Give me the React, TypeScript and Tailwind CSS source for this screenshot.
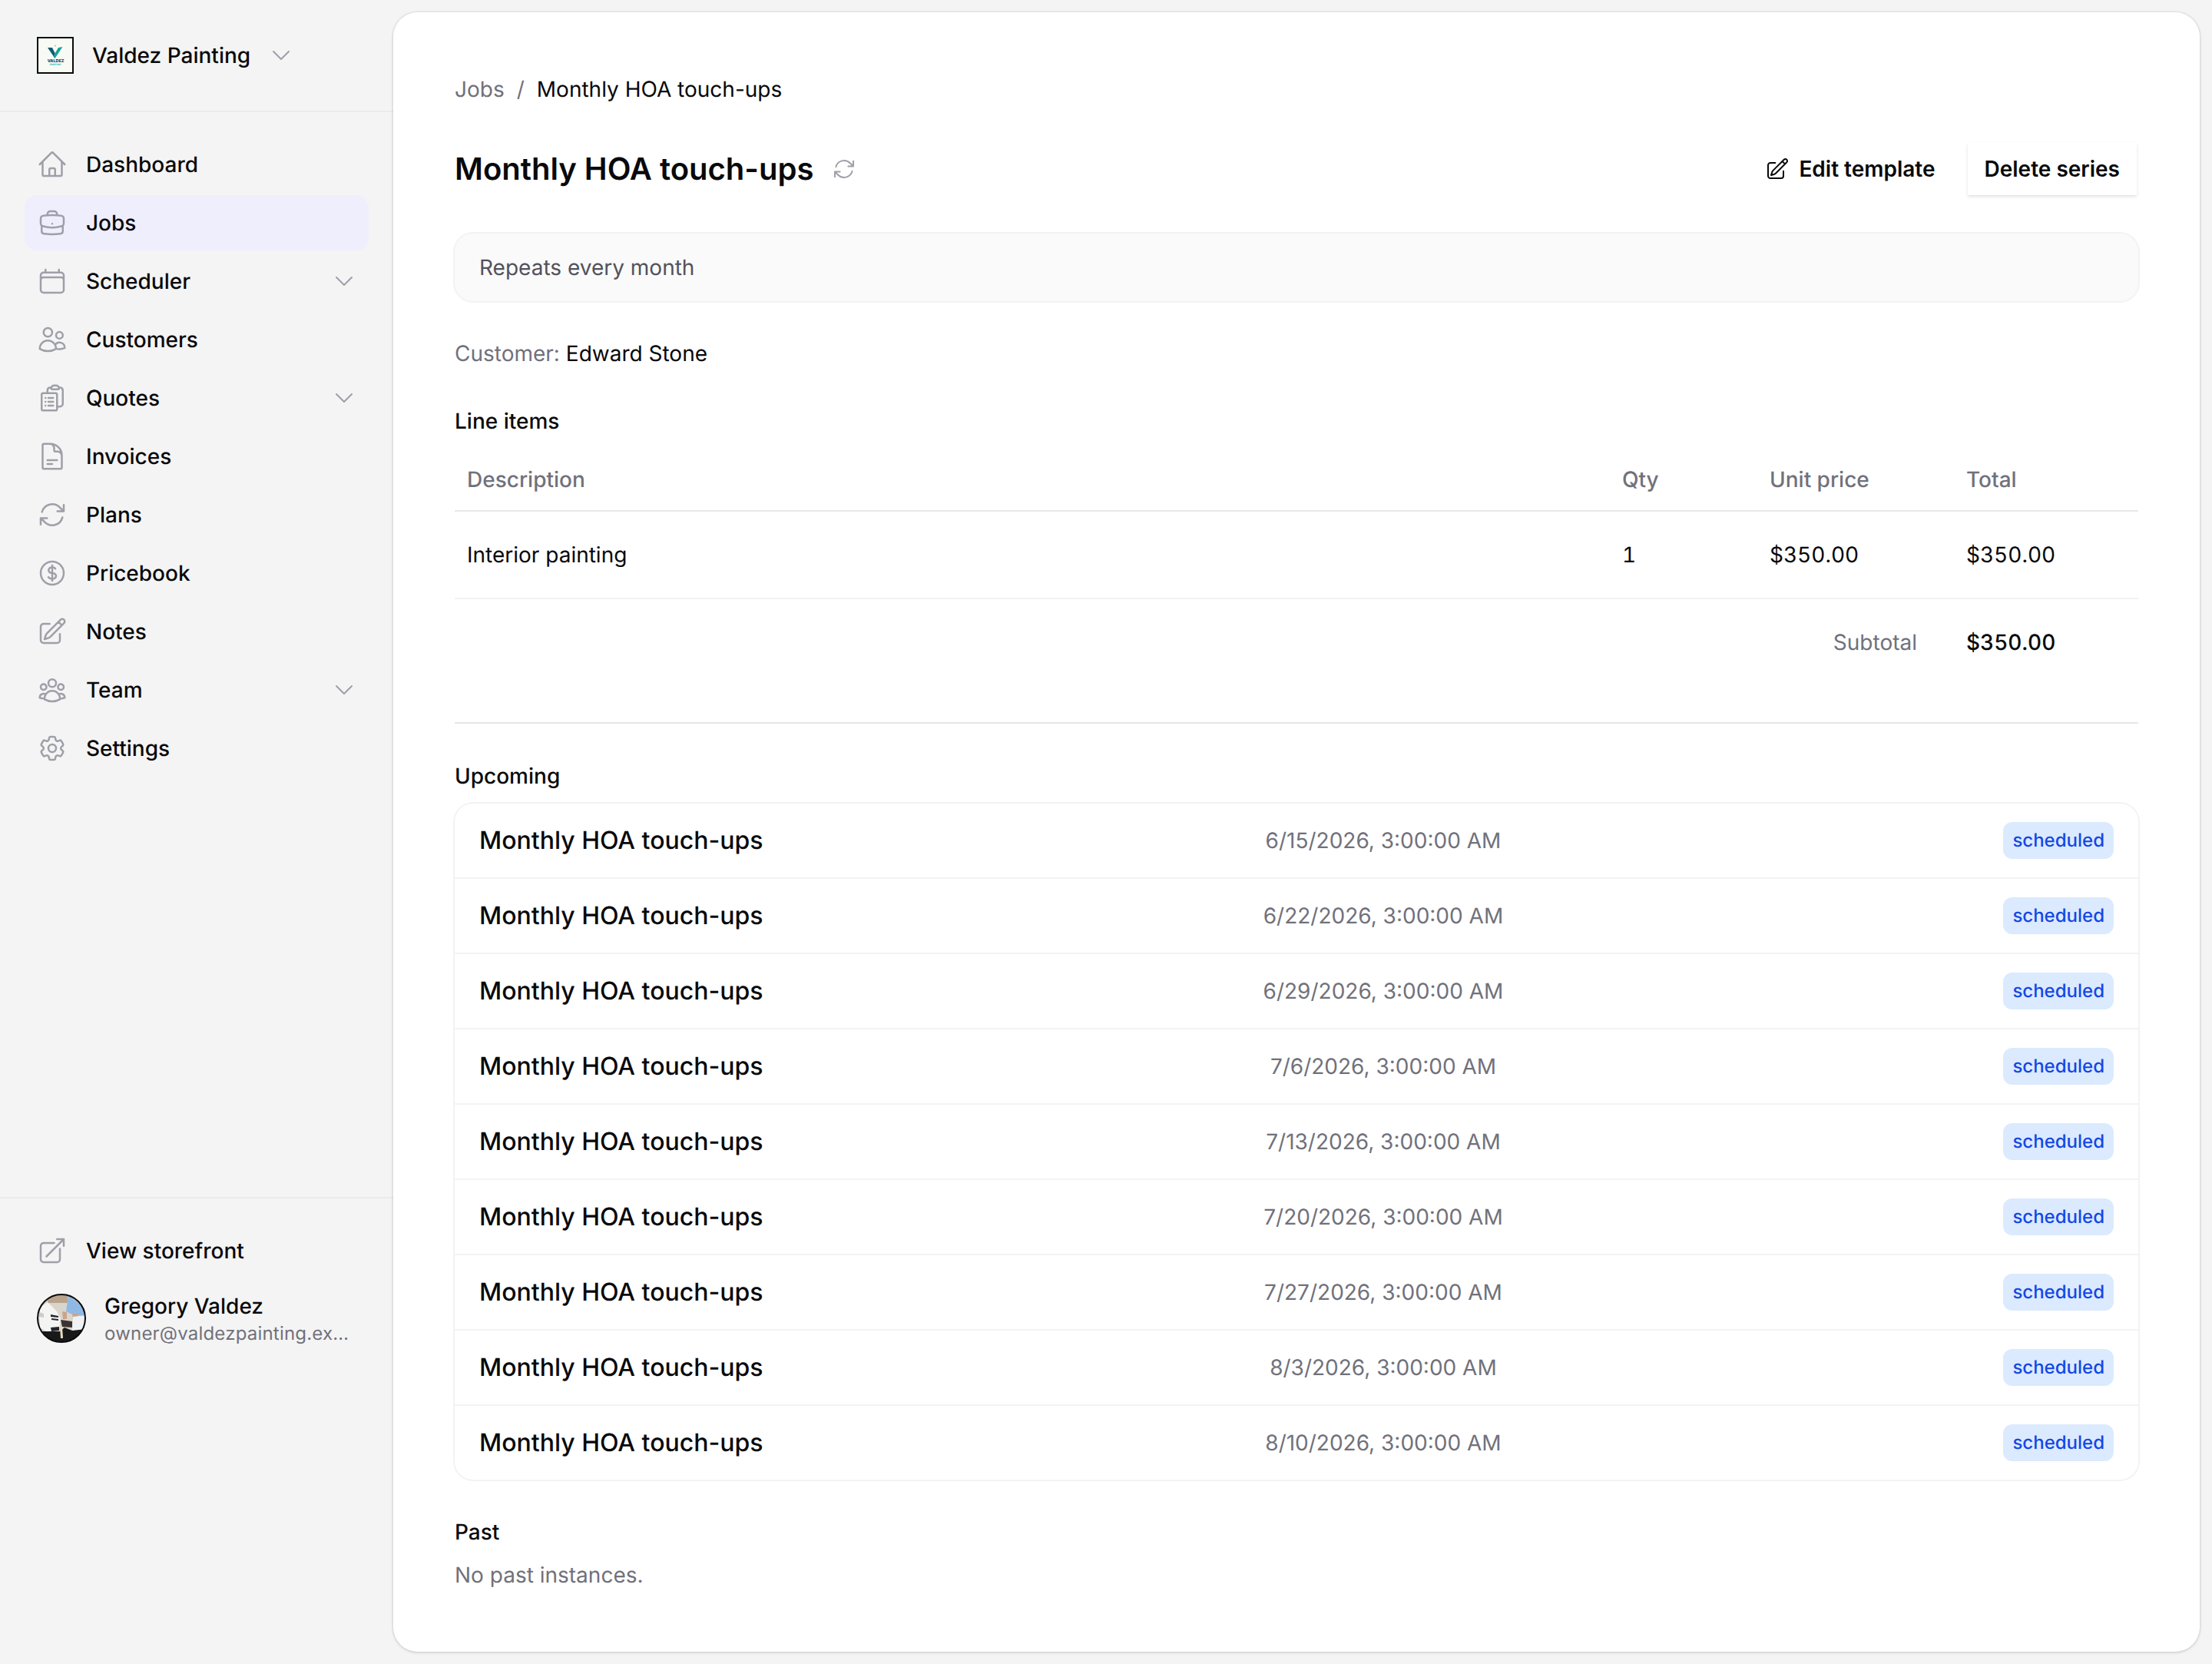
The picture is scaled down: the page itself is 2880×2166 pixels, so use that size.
import type { ComponentType } from "react";
import {
  HiOutlineArrowPath,
  HiOutlineArrowTopRightOnSquare,
  HiOutlineBriefcase,
  HiOutlineCalendar,
  HiOutlineChevronDown,
  HiOutlineClipboardDocumentList,
  HiOutlineCog6Tooth,
  HiOutlineCurrencyDollar,
  HiOutlineDocumentText,
  HiOutlineHome,
  HiOutlinePencilSquare,
  HiOutlineUserGroup,
  HiOutlineUsers,
} from "react-icons/hi2";

type NavItem = {
  label: string;
  icon: ComponentType<{ className?: string }>;
  active?: boolean;
  chevron?: boolean;
};

const navItems: NavItem[] = [
  { label: "Dashboard", icon: HiOutlineHome },
  { label: "Jobs", icon: HiOutlineBriefcase, active: true },
  { label: "Scheduler", icon: HiOutlineCalendar, chevron: true },
  { label: "Customers", icon: HiOutlineUsers },
  { label: "Quotes", icon: HiOutlineClipboardDocumentList, chevron: true },
  { label: "Invoices", icon: HiOutlineDocumentText },
  { label: "Plans", icon: HiOutlineArrowPath },
  { label: "Pricebook", icon: HiOutlineCurrencyDollar },
  { label: "Notes", icon: HiOutlinePencilSquare },
  { label: "Team", icon: HiOutlineUserGroup, chevron: true },
  { label: "Settings", icon: HiOutlineCog6Tooth },
];

const upcoming = [
  "6/15/2026, 3:00:00 AM",
  "6/22/2026, 3:00:00 AM",
  "6/29/2026, 3:00:00 AM",
  "7/6/2026, 3:00:00 AM",
  "7/13/2026, 3:00:00 AM",
  "7/20/2026, 3:00:00 AM",
  "7/27/2026, 3:00:00 AM",
  "8/3/2026, 3:00:00 AM",
  "8/10/2026, 3:00:00 AM",
];

function Logo() {
  return (
    <svg viewBox="0 0 48 48" className="h-12 w-12 shrink-0">
      <rect x="1" y="1" width="46" height="46" fill="#f7faf5" stroke="#0b0b0b" strokeWidth="2" />
      <path d="M14 14 L20 14 L24.5 23 L23.5 28 Z" fill="#0f5c6e" />
      <path d="M33.5 13 L28 14 L22 24 L23.5 28 Z" fill="#17a398" />
      <circle cx="24" cy="11.5" r="0.9" fill="#d9b45b" />
      <text x="24.5" y="33" textAnchor="middle" fontSize="5.4" fontWeight="800" fill="#17485a" fontFamily="Inter, sans-serif">
        VALDEZ
      </text>
      <text x="24" y="37" textAnchor="middle" fontSize="3" fontWeight="700" fill="#25b5a5" fontFamily="Inter, sans-serif">
        PAINTING
      </text>
    </svg>
  );
}

// small stand-in for the avatar photo: car front on the left, man in a blue shirt on the right
function Avatar() {
  return (
    <svg viewBox="0 0 64 64" className="h-16 w-16 shrink-0">
      <defs>
        <clipPath id="avatar-clip">
          <circle cx="32" cy="32" r="31" />
        </clipPath>
      </defs>
      <g clipPath="url(#avatar-clip)">
        <g className="blur-[0.6px]">
          <rect width="64" height="64" fill="#d9d5cd" />
          <rect x="14" y="2" width="26" height="10" fill="#b8a48e" />
          <path d="M41 2 L61 18 L64 30 L46 27 L38 23 Z" fill="#8fb9e4" />
          <path d="M3 19 L14 11 L26 23 L31 33 L29 48 L19 53 L4 44 Z" fill="#f4f4f2" />
          <path d="M3 24 L9 26 L9 31 L3 30 Z" fill="#c9cdd0" />
          <path d="M18 27 L28 29 L28 31 L18 30 Z M19 32 L28 33 L28 35 L19 34 Z M18 44 L29 43 L29 48 L19 49 Z" fill="#26262a" />
          <path d="M33 23 L39 24 L39 33 L34 33 Z" fill="#c9a48c" />
          <path d="M46 26 L54 26 L54 33 L47 33 Z" fill="#c9a48c" />
          <path d="M47 30 L64 28 L64 47 L46 48 Z" fill="#eef1f5" />
          <path d="M31 34 L46 36 L46 44 L33 43 Z" fill="#3a3230" />
          <path d="M0 54 L8 49 L30 49 L36 44 L46 48 L64 46 L64 64 L0 64 Z" fill="#191919" />
          <path d="M30 43 L33 43 L34 58 L31 58 Z" fill="#e6dcc0" />
        </g>
      </g>
      <circle cx="32" cy="32" r="31" fill="none" stroke="#0b0b0b" strokeWidth="2" />
    </svg>
  );
}

function Sidebar() {
  return (
    <aside className="flex h-[1784px] w-[512px] shrink-0 flex-col">
      <div className="flex h-[146px] items-center border-b-2 border-[#ebebeb] pl-12">
        <Logo />
        <span className="ml-6 text-[28px]/10 font-medium text-zinc-950">Valdez Painting</span>
        <HiOutlineChevronDown className="ml-6 h-8 w-8 text-zinc-400" />
      </div>
      <nav className="flex flex-1 flex-col gap-1 px-8 pt-8">
        {navItems.map(({ label, icon: Icon, active, chevron }) => (
          <div
            key={label}
            className={`flex h-[72px] items-center gap-6 rounded-2xl px-4 text-[28px]/10 font-medium text-zinc-950 ${active ? "bg-[#efeefd]" : ""}`}
          >
            <Icon className="h-10 w-10 shrink-0 text-zinc-400" />
            <span className="flex-1">{label}</span>
            {chevron && <HiOutlineChevronDown className="h-8 w-8 text-zinc-400" />}
          </div>
        ))}
      </nav>
      <div className="flex flex-col gap-4 border-t-2 border-[#ebebeb] px-8 pt-8 pb-8">
        <div className="flex h-[72px] items-center gap-6 px-4 text-[28px]/10 font-medium text-zinc-950">
          <HiOutlineArrowTopRightOnSquare className="h-10 w-10 shrink-0 text-zinc-400" />
          <span>View storefront</span>
        </div>
        <div className="flex items-center gap-6 px-4">
          <Avatar />
          <div className="min-w-0 flex-1">
            <div className="text-[28px]/10 font-medium text-zinc-950">Gregory Valdez</div>
            <div className="text-2xl/8 tracking-[0.2px] whitespace-nowrap text-zinc-500">owner@valdezpainting.ex…</div>
          </div>
        </div>
      </div>
    </aside>
  );
}

function LineItems() {
  return (
    <table className="mt-4 w-full table-fixed border-collapse text-left text-[28px]/10">
      <colgroup>
        <col className="w-[1504px]" />
        <col className="w-[192px]" />
        <col className="w-[256px]" />
        <col />
      </colgroup>
      <thead>
        <tr className="border-b-2 border-[#e7e7e7] text-zinc-500">
          <th className="px-4 py-5 font-medium">Description</th>
          <th className="px-4 py-5 font-medium">Qty</th>
          <th className="px-4 py-5 font-medium">Unit price</th>
          <th className="px-4 py-5 font-medium">Total</th>
        </tr>
      </thead>
      <tbody className="text-zinc-950">
        <tr className="border-b-2 border-[#f2f2f2]">
          <td className="px-4 py-9">Interior painting</td>
          <td className="px-4 py-9 tabular-nums">1</td>
          <td className="px-4 py-9 tabular-nums">$350.00</td>
          <td className="px-4 py-9 tabular-nums">$350.00</td>
        </tr>
        <tr>
          <td colSpan={3} className="py-9 pr-12 text-right text-zinc-500">
            Subtotal
          </td>
          <td className="px-4 py-9 font-medium tabular-nums">$350.00</td>
        </tr>
      </tbody>
    </table>
  );
}

export default function App() {
  return (
    <div className="flex min-h-[2166px] bg-[#f4f4f4] font-[Inter,sans-serif] text-zinc-950 antialiased [text-rendering:geometricPrecision]">
      <Sidebar />
      <main className="flex-1 pt-4 pr-4 pb-4">
        <div className="h-[2134px] rounded-[32px] bg-white p-20 shadow-[0_2px_4px_rgba(0,0,0,0.08)] ring-2 ring-zinc-950/5">
          <div className="flex items-center gap-4 text-[28px]/10">
            <span className="text-zinc-500">Jobs</span>
            <span className="text-zinc-500">/</span>
            <span>Monthly HOA touch-ups</span>
          </div>

          <div className="mt-12 flex h-[72px] items-center">
            <h1 className="text-[40px]/[56px] font-semibold">Monthly HOA touch-ups</h1>
            <HiOutlineArrowPath className="ml-6 h-8 w-8 text-zinc-400" />
            <div className="ml-auto flex items-center gap-4">
              <button className="flex h-[72px] items-center gap-3 px-6 text-[28px]/10 font-semibold">
                <HiOutlinePencilSquare className="h-8 w-8" />
                Edit template
              </button>
              <button className="relative isolate h-[72px] border-2 border-transparent px-[22px] text-[28px]/10 font-semibold before:absolute before:inset-0 before:-z-10 before:bg-white before:shadow-[0_2px_4px_rgba(0,0,0,0.12)]">
                Delete series
              </button>
            </div>
          </div>

          <div className="mt-12 rounded-3xl bg-[#fafafa] px-8 py-6 text-[28px]/10 text-zinc-600 ring-2 ring-[#f3f3f3]">
            Repeats every month
          </div>

          <p className="mt-12 text-[28px]/10">
            <span className="text-zinc-500">Customer:</span> Edward Stone
          </p>

          <h2 className="mt-12 text-[28px]/10 font-medium">Line items</h2>
          <LineItems />

          <hr className="mt-12 border-t-2 border-[#e7e7e7]" />

          <h2 className="mt-12 text-[28px]/10 font-medium">Upcoming</h2>
          <div className="mt-4 rounded-3xl ring-2 ring-[#f3f3f3]">
            {upcoming.map((date, i) => (
              <div
                key={date}
                className={`flex items-center justify-between px-8 ${i > 0 ? "h-[98px] border-t-2 border-[#f3f3f3]" : "h-24"}`}
              >
                <span className="text-[32px]/12 font-medium">Monthly HOA touch-ups</span>
                <span className="text-[28px]/10 text-zinc-500">{date}</span>
                <span className="rounded-xl bg-blue-100 px-3 py-2 text-2xl/8 font-medium text-blue-700">scheduled</span>
              </div>
            ))}
          </div>

          <h2 className="mt-12 text-[28px]/10 font-medium">Past</h2>
          <p className="mt-4 text-[28px]/10 text-zinc-500">No past instances.</p>
        </div>
      </main>
    </div>
  );
}
